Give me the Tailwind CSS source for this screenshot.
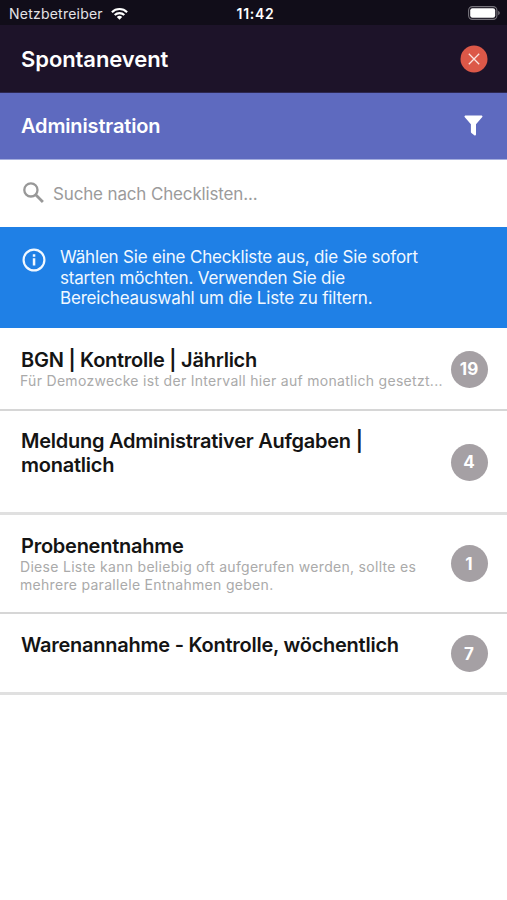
<!DOCTYPE html>
<html lang="de">

<head>
    <meta charset="UTF-8">
    <meta name="viewport" content="width=device-width, initial-scale=1.0">
    <script src="https://cdn.jsdelivr.net/npm/@tailwindcss/browser@4"></script>
    <title>Spontanevent</title>
</head>

<body class="h-[900px] overflow-hidden bg-white font-[Inter,'Liberation_Sans',sans-serif] text-[#141414]">
    <!-- status bar -->
    <div class="grid h-[25px] grid-cols-3 items-center bg-[#110d19] pt-[2px] pr-[7px] pl-[9px] text-white">
        <div class="flex items-center gap-[8px]">
            <span class="text-[14px] leading-none tracking-[0.22px] text-[#e4e3e6]">Netzbetreiber</span>
            <svg class="h-[12px] w-[17px]" viewBox="0 0 17 12" fill="none" stroke="#fff" stroke-width="2.1">
                <path d="M.9 4.2a10.8 10.8 0 0 1 15.2 0" />
                <path d="M3.7 7.1a6.8 6.8 0 0 1 9.6 0" />
                <path d="M8.5 11.8 5.8 9.1a3.8 3.8 0 0 1 5.4 0z" fill="#fff" stroke="none" />
            </svg>
        </div>
        <span class="pl-[2px] text-center text-[14px] leading-none font-semibold tracking-[0.7px]">11:42</span>
        <svg class="mb-px h-[14px] w-[32px] justify-self-end" viewBox="0 0 32 14">
            <rect x=".6" y=".6" width="28.3" height="12.8" rx="3.8" fill="none" stroke="#77747c" stroke-width="1.1" />
            <rect x="2.2" y="2.2" width="25" height="9.6" rx="2.2" fill="#fff" />
            <path d="M30.2 4.8q1.6.8 1.6 2.2t-1.6 2.2z" fill="#77747c" />
        </svg>
    </div>

    <!-- header -->
    <div class="flex h-[68px] items-center justify-between border-b border-[#2d2750] bg-[#1d1329] pr-[19px] pl-[21px]">
        <h1 class="pt-px text-[22px] leading-none font-semibold tracking-[-0.08px] text-white">Spontanevent</h1>
        <svg class="h-[28px] w-[28px]" viewBox="0 0 28 28">
            <circle cx="14" cy="14" r="13.5" fill="#dc5848" />
            <path d="M8.8 8.8l10.4 10.4M19.2 8.8 8.8 19.2" stroke="#fbe3df" stroke-width="1.3" />
        </svg>
    </div>
    <div class="flex h-[67px] items-center justify-between border-b border-[#a5aede] bg-[#5e6abf] pr-[24px] pl-[21px]">
        <h2 class="text-[20px] leading-none font-semibold tracking-[-0.15px] text-white">Administration</h2>
        <svg class="mb-[2px] h-[21px] w-[19px]" viewBox="0 0 19 21" fill="#fff">
            <path d="M1.2.4h16.6q1.2.5.5 1.6L12 9.3v10.2q-.2 1.3-1.4.9L7.4 18q-.5-.4-.5-1V9.3L.6 2Q0 .9 1.2.4z" />
        </svg>
    </div>

    <!-- search -->
    <div class="flex h-[67px] items-center gap-[9px] pl-[23px]">
        <svg class="mb-[3px] h-[21px] w-[21px]" viewBox="0 0 21 21" fill="none" stroke="#989898" stroke-width="2.3">
            <circle cx="7.9" cy="7.9" r="6.6" />
            <path d="M12.7 12.7l7.2 7.2" stroke-width="2.8" />
        </svg>
        <span class="pt-[2px] text-[17px] leading-none tracking-[-0.15px] text-[#9b9b9b]">Suche nach Checklisten...</span>
    </div>

    <!-- info -->
    <div class="flex h-[101px] gap-[14px] bg-[#1f80e6] pt-[20px] pl-[22px] text-[#f1f8ff]">
        <svg class="mt-px h-[24px] w-[24px]" viewBox="0 0 24 24">
            <circle cx="12" cy="12" r="10.4" fill="none" stroke="currentColor" stroke-width="2.2" />
            <path d="M10.8 6.2h2.5v2.5h-2.5zM10.8 10.3h2.5v7.3h-2.5z" fill="currentColor" />
        </svg>
        <p class="text-[17px] leading-[20.7px] tracking-[-0.18px] whitespace-nowrap">Wählen Sie eine Checkliste aus, die Sie sofort<br>starten möchten. Verwenden Sie die<br>Bereicheauswahl um die Liste zu filtern.</p>
    </div>

    <!-- checklists -->
    <div class="flex h-[83px] items-center justify-between border-b-2 border-[#d6d6d6] pr-[19.5px] pl-[21px]">
        <div class="h-full w-[424px] pt-[20px] whitespace-nowrap">
            <h3 class="text-[20px] leading-[24px] font-semibold tracking-[-0.25px]">BGN | Kontrolle | Jährlich</h3>
            <p class="-ml-px text-[14px] leading-[18px] tracking-[0.3px] text-[#aaaaaa]">Für Demozwecke ist der Intervall hier auf monatlich gesetzt...</p>
        </div>
        <span class="mt-px flex h-[37px] w-[37px] items-center justify-center rounded-full bg-[#a5a0a4] pt-px text-[17px] leading-none font-bold text-white">19</span>
    </div>
    <div class="flex h-[104px] items-center justify-between border-b-3 border-[#e0e0e0] pr-[19.5px] pl-[21px]">
        <div class="h-full pt-[19px] whitespace-nowrap">
            <h3 class="text-[20px] leading-[23.5px] font-semibold tracking-[-0.25px]">Meldung Administrativer Aufgaben |<br>monatlich</h3>
        </div>
        <span class="mt-px flex h-[37px] w-[37px] items-center justify-center rounded-full bg-[#a5a0a4] pt-px text-[17px] leading-none font-bold text-white">4</span>
    </div>
    <div class="flex h-[99px] items-center justify-between border-b-2 border-[#d6d6d6] pr-[19.5px] pl-[21px]">
        <div class="h-full pt-[19px] whitespace-nowrap">
            <h3 class="text-[20px] leading-[24px] font-semibold tracking-[-0.25px]">Probenentnahme</h3>
            <p class="-ml-px text-[14px] leading-[17.7px] tracking-[0.3px] text-[#aaaaaa]">Diese Liste kann beliebig oft aufgerufen werden, sollte es<br>mehrere parallele Entnahmen geben.</p>
        </div>
        <span class="flex h-[37px] w-[37px] items-center justify-center rounded-full bg-[#a5a0a4] pt-px text-[17px] leading-none font-bold text-white">1</span>
    </div>
    <div class="flex h-[81px] items-center justify-between border-b-3 border-[#e0e0e0] pr-[19.5px] pl-[21px]">
        <div class="h-full pt-[19px] whitespace-nowrap">
            <h3 class="text-[20px] leading-[24px] font-semibold tracking-[-0.25px]">Warenannahme - Kontrolle, wöchentlich</h3>
        </div>
        <span class="mt-px flex h-[37px] w-[37px] items-center justify-center rounded-full bg-[#a5a0a4] pt-px text-[17px] leading-none font-bold text-white">7</span>
    </div>
</body>

</html>
